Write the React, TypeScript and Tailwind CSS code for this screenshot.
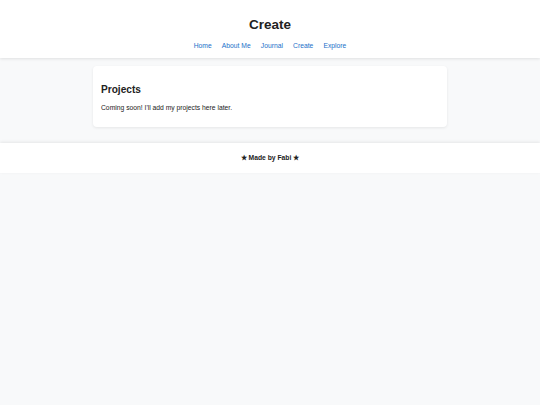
import React from "react";

export default function App() {
  const links = ["Home", "About Me", "Journal", "Create", "Explore"];
  return (
    <div
      className="min-h-[405px] bg-[#f8f9fa] text-[#222]"
      style={{ fontFamily: '"Liberation Sans", Arial, sans-serif' }}
    >
      <header className="bg-white pt-[17px] pb-[8.5px] shadow-[0_1px_3px_rgba(0,0,0,0.1)] relative z-10">
        <h1 className="text-center text-[13.5px] leading-[16px] font-bold text-[#222]">Create</h1>
        <nav className="mt-[8.5px] flex justify-center gap-[10.1px]">
          {links.map((l) => (
            <a key={l} className="text-[6.75px] leading-[8px] text-[#1a6fc9]">
              {l}
            </a>
          ))}
        </nav>
      </header>
      <main className="pt-[8px] pb-[16px]">
        <section className="mx-auto w-[354px] bg-white rounded-[4px] shadow-[0_1px_3px_rgba(0,0,0,0.08)] pt-[18px] px-[8px] pb-[15px]">
          <h2 className="text-[10.125px] leading-[11.5px] font-bold text-[#222]">Projects</h2>
          <p className="mt-[8.5px] text-[6.75px] leading-[8px] text-[#222]">
            Coming soon! I'll add my projects here later.
          </p>
        </section>
      </main>
      <footer className="bg-white pt-[11px] pb-[11px] shadow-[0_-1px_3px_rgba(0,0,0,0.08)] text-center">
        <p className="text-[6.75px] leading-[8px] font-bold text-[#222]">★ Made by Fabi ★</p>
      </footer>
    </div>
  );
}
